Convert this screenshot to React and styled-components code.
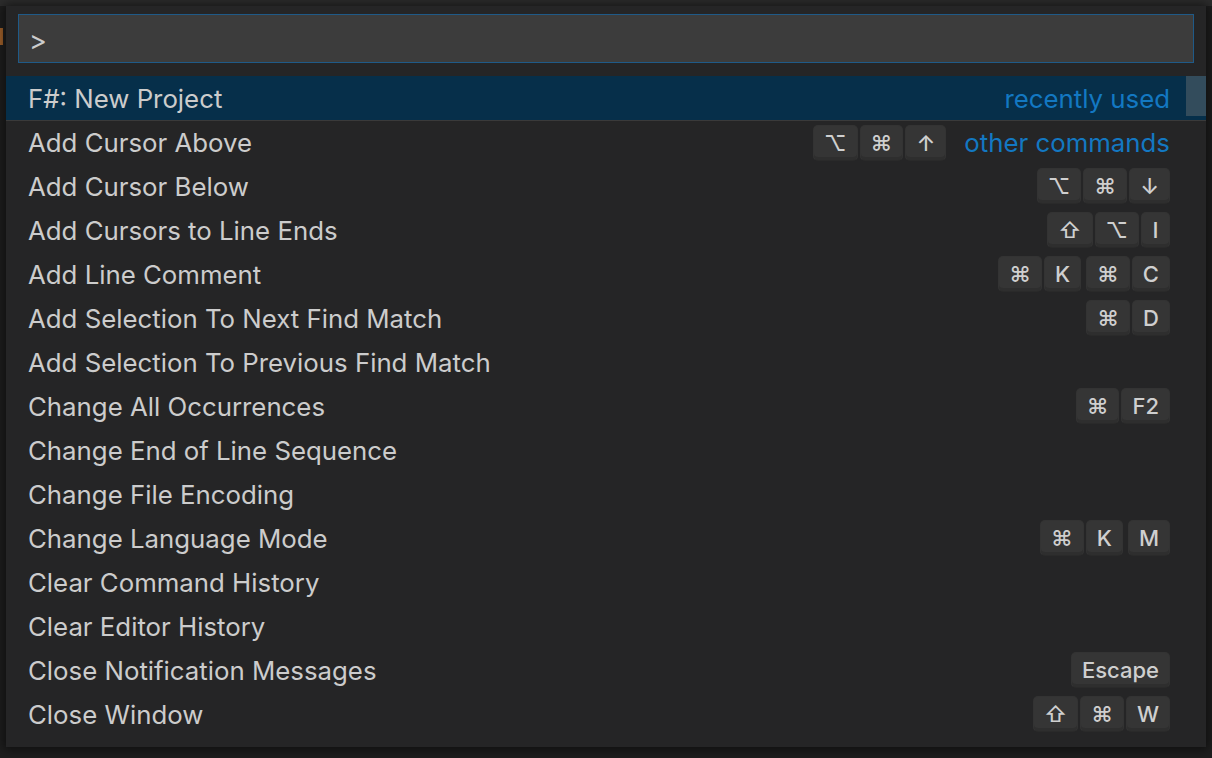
import React from "react";
import styled, { createGlobalStyle } from "styled-components";

const Global = createGlobalStyle`
  html, body { margin: 0; padding: 0; background: #1e1e1e; }
  body { width: 1212px; height: 758px; overflow: hidden; font-family: Inter, "DejaVu Sans", sans-serif; }
`;

const Screen = styled.div`
  position: relative;
  width: 1212px;
  height: 758px;
  background: #1e1e1e;
  overflow: hidden;
`;

const TabStrip = styled.div`
  height: 6px;
  background: #2d2d2d;
`;

const EdgeMark = styled.div`
  width: 3px;
  height: 17px;
  margin-top: 22px;
  background: #a0602a;
`;

const Widget = styled.div`
  position: absolute;
  top: 6px;
  left: 6px;
  width: 1200px;
  height: 741px;
  box-sizing: border-box;
  background: #252526;
  box-shadow: 0 0 10px 2px rgba(0, 0, 0, 0.55);
  padding: 8px 0 10px;
  display: flex;
  flex-direction: column;
  overflow: hidden;
`;

const InputBox = styled.div`
  margin: 0 12px;
  height: 49px;
  box-sizing: border-box;
  border: 1px solid #1f5a88;
  background: #3c3c3c;
  display: flex;
  align-items: center;
  padding: 4px 10px 0;
  color: #cccccc;
  font-size: 27px;
`;

const List = styled.div`
  position: relative;
  margin-top: 13px;
  flex: 1;
  overflow: hidden;
`;

const Row = styled.div`
  height: 44px;
  box-sizing: border-box;
  display: flex;
  align-items: center;
  padding: 0 36px 0 22px;
  background: ${(p) => (p.$focused ? "#062f4a" : "transparent")};
  border-top: ${(p) => (p.$separator ? "1px solid #3a3a3a" : "none")};
  color: #cccccc;
  font-size: 25.8px;
`;

const Label = styled.span`
  flex: 1;
  white-space: nowrap;
`;

const GroupLabel = styled.span`
  color: #1378c2;
  margin-left: 18px;
  white-space: nowrap;
`;

const Keys = styled.div`
  display: flex;
  align-items: center;
  gap: 5px;
`;

const Chord = styled.div`
  display: flex;
  gap: 2px;
`;

const Key = styled.span`
  height: 36px;
  box-sizing: border-box;
  display: inline-flex;
  align-items: center;
  justify-content: center;
  min-width: 29px;
  padding: 0 10px;
  border-radius: 5px;
  background: #353535;
  border: 1px solid rgba(51, 51, 51, 0.6);
  border-bottom-color: rgba(40, 40, 40, 0.8);
  box-shadow: inset 0 -3px 0 #2e2e2e;
  color: #cfcfcf;
  font-size: 22px;
  font-weight: 500;
  font-family: Inter, "DejaVu Sans", sans-serif;
`;

const Scrollbar = styled.div`
  position: absolute;
  top: 0;
  right: 0;
  width: 20px;
  height: 40px;
  background: rgba(121, 121, 121, 0.4);
`;

const rows = [
  { label: "F#: New Project", group: "recently used", focused: true },
  { label: "Add Cursor Above", keys: [["⌥", "⌘", "↑"]], group: "other commands", separator: true },
  { label: "Add Cursor Below", keys: [["⌥", "⌘", "↓"]] },
  { label: "Add Cursors to Line Ends", keys: [["⇧", "⌥", "I"]] },
  { label: "Add Line Comment", keys: [["⌘", "K"], ["⌘", "C"]] },
  { label: "Add Selection To Next Find Match", keys: [["⌘", "D"]] },
  { label: "Add Selection To Previous Find Match" },
  { label: "Change All Occurrences", keys: [["⌘", "F2"]] },
  { label: "Change End of Line Sequence" },
  { label: "Change File Encoding" },
  { label: "Change Language Mode", keys: [["⌘", "K"], ["M"]] },
  { label: "Clear Command History" },
  { label: "Clear Editor History" },
  { label: "Close Notification Messages", keys: [["Escape"]] },
  { label: "Close Window", keys: [["⇧", "⌘", "W"]] },
];

export default function App() {
  return (
    <Screen>
      <Global />
      <TabStrip />
      <EdgeMark />
      <Widget>
        <InputBox>&gt;</InputBox>
        <List>
          {rows.map((r) => (
            <Row key={r.label} $focused={r.focused} $separator={r.separator}>
              <Label>{r.label}</Label>
              {r.keys && (
                <Keys>
                  {r.keys.map((chord, i) => (
                    <Chord key={i}>
                      {chord.map((k, j) => (
                        <Key key={j}>{k}</Key>
                      ))}
                    </Chord>
                  ))}
                </Keys>
              )}
              {r.group && <GroupLabel>{r.group}</GroupLabel>}
            </Row>
          ))}
          <Scrollbar />
        </List>
      </Widget>
    </Screen>
  );
}
